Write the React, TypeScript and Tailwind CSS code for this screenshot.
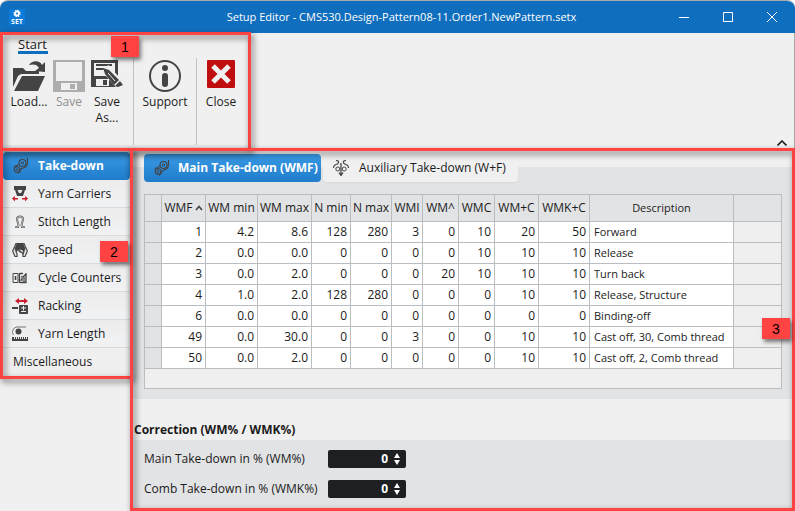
import type { ReactNode } from "react";

type NavItem = { label: string; icon: ReactNode };

type Row = { values: string[]; description: string };

const columns = ["WMF", "WM min", "WM max", "N min", "N max", "WMI", "WM^", "WMC", "WM+C", "WMK+C"];

const rows: Row[] = [
  { values: ["1", "4.2", "8.6", "128", "280", "3", "0", "10", "20", "50"], description: "Forward" },
  { values: ["2", "0.0", "0.0", "0", "0", "0", "0", "10", "10", "10"], description: "Release" },
  { values: ["3", "0.0", "2.0", "0", "0", "0", "20", "10", "10", "10"], description: "Turn back" },
  { values: ["4", "1.0", "2.0", "128", "280", "0", "0", "0", "10", "10"], description: "Release, Structure" },
  { values: ["6", "0.0", "0.0", "0", "0", "0", "0", "0", "0", "0"], description: "Binding-off" },
  { values: ["49", "0.0", "30.0", "0", "0", "3", "0", "0", "10", "10"], description: "Cast off, 30, Comb thread" },
  { values: ["50", "0.0", "2.0", "0", "0", "0", "0", "0", "10", "10"], description: "Cast off, 2, Comb thread" },
];

function SetLogo() {
  return (
    <svg width="16" height="16" viewBox="0 0 16 16" className="bg-[#0a7bd8]" aria-hidden="true">
      <circle cx="8" cy="4.5" r="2" fill="none" stroke="#fff" strokeWidth="1.8" />
      <circle cx="8" cy="4.5" r="3.1" fill="none" stroke="#fff" strokeWidth="1.2" strokeDasharray="1.4 1.03" />
      <text x="8" y="15" textAnchor="middle" fontSize="7" fontWeight="700" fill="#fff">
        SET
      </text>
    </svg>
  );
}

function LoadIcon() {
  return (
    <svg width="32" height="32" viewBox="0 0 32 32" fill="#444" aria-hidden="true">
      <path d="M0 8H10L13 11H26V14H8L5 16L0 27Z" />
      <path d="M9 16H32L25 31H1Z" />
      <path d="M16 5C19 0 27 0 29 5L32 2V12L22 11L26 8C24 4 20 4 16 5Z" />
    </svg>
  );
}

function SaveIcon() {
  return (
    <svg width="32" height="32" viewBox="0 0 32 32" fill="#adadad" aria-hidden="true">
      <path fillRule="evenodd" d="M0 0H32V32H0ZM3 2V21H29V2ZM8 23V30H24V23Z" />
      <path d="M17 24H22V29H17Z" />
    </svg>
  );
}

function SaveAsIcon() {
  return (
    <svg width="32" height="32" viewBox="0 0 32 32" aria-hidden="true">
      <path fill="#444" fillRule="evenodd" d="M0 0H27V27H0ZM3 3V16H24V3ZM5 19V26H18V19Z" />
      <path fill="#444" d="M5 4H21V6H5ZM5 8H13V10H5ZM12 20H16V25H12Z" />
      <path d="M14 8L30 26" stroke="#f0f0f0" strokeWidth="9" />
      <path fill="#444" d="M12 8L18 10L28 20L23 25L14 14Z" />
      <path fill="#444" d="M29 21L32 25L27 27L24 26Z" />
      <path d="M17 13L24 21" stroke="#f0f0f0" strokeWidth="1" />
    </svg>
  );
}

function SupportIcon() {
  return (
    <svg width="32" height="32" viewBox="0 0 32 32" fill="#444" aria-hidden="true">
      <circle cx="16" cy="16" r="15" fill="none" stroke="#444" strokeWidth="2" />
      <circle cx="16" cy="8" r="3" />
      <path d="M13 16A3 3 0 0 1 19 16V24A3 3 0 0 1 13 24Z" />
    </svg>
  );
}

function CloseIcon() {
  return (
    <svg width="28" height="28" viewBox="0 0 28 28" aria-hidden="true">
      <rect width="28" height="28" rx="1" fill="#c00d0d" />
      <path d="M6 6L22 22M22 6L6 22" stroke="#f0f0f0" strokeWidth="5" />
    </svg>
  );
}

function TakeDownIcon() {
  return (
    <svg width="16" height="16" viewBox="0 0 16 16" fill="none" stroke="#444" aria-hidden="true">
      <circle cx="9.5" cy="5" r="3.5" strokeWidth="1.2" />
      <circle cx="9.5" cy="5" r="1.2" strokeWidth="1" />
      <circle cx="4" cy="11.5" r="2.8" strokeWidth="1.2" />
      <circle cx="4" cy="11.5" r="0.8" strokeWidth="1" />
      <path d="M14.5 0V5C14.5 9 11 10 8.5 10.5C7.5 11 8 14 5 15.5M1 9C2 7 5 8 6 6" strokeWidth="1.1" />
    </svg>
  );
}

function YarnCarriersIcon() {
  return (
    <svg width="16" height="16" viewBox="0 0 16 16" aria-hidden="true">
      <path fill="#444" fillRule="evenodd" d="M2 0H14V4H13L11 10H5L3 4H2ZM5.5 4L7 7H9L10.5 4Z" />
      <path fill="#c8202c" d="M0 12.5L3 10V12H6V13.5H3V15.5ZM16 12.5L13 10V12H10V13.5H13V15.5Z" />
    </svg>
  );
}

function StitchLengthIcon() {
  return (
    <svg width="16" height="16" viewBox="0 0 16 16" fill="none" aria-hidden="true">
      <path d="M3 13H6C7.5 10 5 8 5 5.5A3 3 0 0 1 11 5.5C11 8 8.5 10 10 13H13" stroke="#555" strokeWidth="2" />
      <path d="M3 13H6C7.5 10 5 8 5 5.5A3 3 0 0 1 11 5.5C11 8 8.5 10 10 13H13" stroke="#eee" strokeWidth=".7" />
    </svg>
  );
}

function SpeedIcon() {
  return (
    <svg width="16" height="16" viewBox="0 0 16 16" aria-hidden="true">
      <path
        d="M4 1.5H12L15.3 9L13 14.5H11V11.5L12 10C11 6 5 6 4 10L5 11.5V14.5H3L.7 9Z"
        fill="#eee"
        stroke="#444"
        strokeWidth="1.2"
      />
      <path d="M4.5 2H11.5L13.5 7L12 10C10.5 6 5.5 6 4 10L2.5 7Z" fill="#444" />
      <path d="M6 7L12 12L7 9.5Z" fill="#444" stroke="#444" strokeWidth=".8" />
    </svg>
  );
}

function CycleCountersIcon() {
  return (
    <svg width="16" height="16" viewBox="0 0 16 16" fill="none" stroke="#444" aria-hidden="true">
      <path d="M1 3.5H6V12.5H1Z" strokeWidth="1" />
      <path d="M3.5 6V10" strokeWidth="1.6" />
      <path d="M7.5 3V13M8 3.5H11M10 6V10H8.5M8 12.5H14.5M14 3V13M11 7L14 4M12 7V13" strokeWidth="1.3" />
    </svg>
  );
}

function RackingIcon() {
  return (
    <svg width="16" height="16" viewBox="0 0 16 16" aria-hidden="true">
      <path fill="#c8202c" d="M3 3L7 0V2H12V0L16 3L12 6V4H7V6Z" />
      <path d="M0 10H6" stroke="#444" strokeWidth="2" />
      <rect x="7" y="7" width="9" height="9" rx="1" fill="#444" />
      <path d="M9 10H14M11.5 8V12.5M9 13.5H14" stroke="#eee" />
    </svg>
  );
}

function YarnLengthIcon() {
  return (
    <svg width="16" height="16" viewBox="0 0 16 16" fill="none" aria-hidden="true">
      <path d="M14 1H5A5 5 0 0 0 1.5 9" stroke="#777" />
      <circle cx="6.5" cy="5.5" r="3" fill="#444" />
      <path d="M0 11H16V15H0Z" fill="#444" />
      <path d="M2.5 11V13M4.5 11V13M6.5 11V13M8.5 11V13M10.5 11V13M12.5 11V13M14.5 11V13" stroke="#eee" />
    </svg>
  );
}

function AuxiliaryIcon() {
  return (
    <svg width="16" height="16" viewBox="0 0 16 16" fill="none" stroke="#444" aria-hidden="true">
      <circle cx="4.8" cy="9" r="2" strokeWidth="1" />
      <circle cx="11.2" cy="9" r="2" strokeWidth="1" />
      <path d="M8 3V15M6 12.5L8 15.5L10 12.5" strokeWidth="1.3" />
      <path d="M3 .5C7 .5 6 4 3 4.5C1 5 .5 6 .5 8M13 .5C9 .5 10 4 13 4.5C15 5 15.5 6 15.5 8" strokeWidth="1.1" />
    </svg>
  );
}

const navItems: NavItem[] = [
  { label: "Yarn Carriers", icon: <YarnCarriersIcon /> },
  { label: "Stitch Length", icon: <StitchLengthIcon /> },
  { label: "Speed", icon: <SpeedIcon /> },
  { label: "Cycle Counters", icon: <CycleCountersIcon /> },
  { label: "Racking", icon: <RackingIcon /> },
  { label: "Yarn Length", icon: <YarnLengthIcon /> },
];

function Frame() {
  return (
    <div className="pointer-events-none absolute inset-0 z-10 border-3 border-[#ff4343] drop-shadow-[2px_3px_3px_rgba(0,0,0,0.6)]" />
  );
}

function Marker({ children, className }: { children: ReactNode; className: string }) {
  return (
    <span
      className={`absolute z-20 flex h-[21px] w-7 items-center justify-center bg-[#ff4343] font-['Liberation_Sans'] text-sm text-black shadow-[2px_3px_4px_rgba(0,0,0,0.5)] ${className}`}
    >
      {children}
    </span>
  );
}

function RibbonButton({ icon, label, className }: { icon: ReactNode; label: ReactNode; className: string }) {
  return (
    <button type="button" className={`flex flex-col items-center gap-0.5 text-center leading-4 ${className}`}>
      <span className="flex h-8 items-start">{icon}</span>
      <span>{label}</span>
    </button>
  );
}

function PercentField({ id, label }: { id: string; label: string }) {
  return (
    <div className="flex items-center">
      <label htmlFor={id} className="w-46">
        {label}
      </label>
      <div className="flex h-[18px] w-[78px] items-center rounded-xs bg-[#1d1f23] pr-1 text-white">
        <input
          id={id}
          type="text"
          inputMode="numeric"
          defaultValue="0"
          className="w-full min-w-0 bg-transparent pr-1 text-right font-bold outline-none"
        />
        <div className="flex flex-col gap-0.5">
          <button type="button" aria-label="Increase" className="block">
            <svg width="10" height="5" viewBox="0 0 10 5" fill="#fff">
              <path d="M2 5L5 0L8 5Z" />
            </svg>
          </button>
          <button type="button" aria-label="Decrease" className="block">
            <svg width="10" height="5" viewBox="0 0 10 5" fill="#fff">
              <path d="M2 0L5 5L8 0Z" />
            </svg>
          </button>
        </div>
      </div>
    </div>
  );
}

export default function App() {
  return (
    <div className="flex min-h-screen flex-col overflow-hidden rounded-t-lg border-t border-[#a9a9a9] bg-[#f0f0f0] font-['Open_Sans',sans-serif] text-xs text-[#1b1b1b]">
      <header className="grid h-8 grid-cols-[1fr_auto_1fr] items-center bg-[#106ebe] pr-px pl-[9px] text-white">
        <SetLogo />
        <h1 className="text-[11px]">Setup Editor - CMS530.Design-Pattern08-11.Order1.NewPattern.setx</h1>
        <div className="flex justify-end">
          {["Minimize", "Maximize", "Close window"].map((name, index) => (
            <button key={name} type="button" aria-label={name} className="flex w-11 justify-center">
              <svg width="12" height="12" viewBox="0 0 12 12" fill="none" stroke="#fff">
                {index === 0 ? <path d="M1 6.5H11" /> : null}
                {index === 1 ? <path d="M1.5 1.5H10.5V10.5H1.5Z" /> : null}
                {index === 2 ? <path d="M1 1L11 11M11 1L1 11" /> : null}
              </svg>
            </button>
          ))}
        </div>
      </header>

      <section className="flex h-[115px] items-end justify-between border-r border-[#a9a9a9]">
        <div className="relative -mb-[3px] h-[119px] w-[251px] pt-1.5">
          <Frame />
          <Marker className="top-1 right-28">1</Marker>
          <h2 className="ml-[18px] w-[30px] border-b-3 border-[#106ebe] text-[13px] leading-[13px]">Start</h2>
          <div className="flex pl-[9px]">
            <RibbonButton className="w-10 pt-1.5" icon={<LoadIcon />} label="Load..." />
            <RibbonButton className="w-10 pt-1.5 text-[#8f8f8f]" icon={<SaveIcon />} label="Save" />
            <RibbonButton
              className="w-9 pt-1.5"
              icon={<SaveAsIcon />}
              label={
                <>
                  Save
                  <br />
                  As...
                </>
              }
            />
            <div className="mt-1 ml-2 h-[87px] w-px bg-[#c2c2c4]" />
            <RibbonButton className="w-[62px] pt-1.5" icon={<SupportIcon />} label="Support" />
            <div className="mt-1 h-[87px] w-px bg-[#c2c2c4]" />
            <RibbonButton className="w-12 pt-1.5" icon={<CloseIcon />} label="Close" />
          </div>
        </div>
        <button type="button" aria-label="Collapse ribbon" className="mr-[7px] mb-0.5">
          <svg width="10" height="6" viewBox="0 0 10 6" fill="none" stroke="#222" strokeWidth="1.6">
            <path d="M0.5 5.5L5 1L9.5 5.5" />
          </svg>
        </button>
      </section>

      <div className="flex flex-1">
        <nav className="relative w-[133px] shrink-0 self-start px-[3px] pt-1 pb-[3px]">
          <Frame />
          <Marker className="top-[93px] right-[5px]">2</Marker>
          <button
            type="button"
            className="flex h-7 w-full items-center gap-[9px] rounded-sm bg-linear-to-b from-[#3a9ae4] to-[#1f7ccb] pl-2.5 font-bold text-white"
          >
            <TakeDownIcon />
            Take-down
          </button>
          {navItems.map((item) => (
            <button
              key={item.label}
              type="button"
              className="flex h-7 w-full items-center gap-2.5 border-b border-[#d9dadc] bg-linear-to-b from-[#ececed] to-[#f1f2f3] pl-[9px] whitespace-nowrap"
            >
              {item.icon}
              {item.label}
            </button>
          ))}
          <button type="button" className="flex h-7 w-full items-center bg-[#efeff0] pl-2.5">
            Miscellaneous
          </button>
        </nav>

        <main className="relative -ml-[3px] flex min-w-0 flex-1 flex-col pt-[19px]">
          <Frame />
          <Marker className="top-[170px] right-[5px]">3</Marker>
          <section className="bg-[#e2e3e5] pr-[13px] pb-[10px] pl-3.5">
            <div className="-mt-[13px] mb-3 flex gap-0.5">
              <button
                type="button"
                className="flex h-7 w-[177px] items-center gap-2 rounded-sm bg-linear-to-b from-[#3a9ae4] to-[#1f7ccb] pl-2.5 font-bold whitespace-nowrap text-white"
              >
                <TakeDownIcon />
                Main Take-down (WMF)
              </button>
              <button
                type="button"
                className="flex h-7 w-[195px] items-center gap-2.5 rounded-sm bg-[#f0f0f1] pl-2.5 whitespace-nowrap shadow-xs"
              >
                <AuxiliaryIcon />
                Auxiliary Take-down (W+F)
              </button>
            </div>
            <table className="w-full table-fixed border-collapse border border-[#bcbdc0] bg-[#efefef]">
              <colgroup>
                <col className="w-[17px]" />
                <col className="w-11" />
                <col className="w-13" />
                <col className="w-[54px]" />
                <col className="w-[39px]" />
                <col className="w-[41px]" />
                <col className="w-[31px]" />
                <col className="w-9" />
                <col className="w-9" />
                <col className="w-11" />
                <col className="w-[51px]" />
                <col className="w-36" />
                <col />
              </colgroup>
              <thead>
                <tr className="h-[27px] bg-[#e2e3e5]">
                  <th className="border border-[#bcbdc0]" />
                  {columns.map((column, index) => (
                    <th key={column} className="border border-[#bcbdc0] p-0 font-normal whitespace-nowrap">
                      <span className="flex items-center justify-center gap-0.5">
                        {column}
                        {index === 0 ? (
                          <svg width="8" height="6" viewBox="0 0 8 6" fill="none" stroke="#444" strokeWidth="1.6">
                            <path d="M1 5L4 1.5L7 5" />
                          </svg>
                        ) : null}
                      </span>
                    </th>
                  ))}
                  <th className="border border-[#bcbdc0] p-0 text-[11px] font-normal">Description</th>
                  <th className="border border-[#bcbdc0]" />
                </tr>
              </thead>
              <tbody>
                {rows.map((row) => (
                  <tr key={row.values[0]} className="h-[21px] leading-4">
                    <td className="border border-[#bcbdc0] bg-[#e2e3e5] p-0" />
                    {row.values.map((value, index) => (
                      <td key={columns[index]} className="border border-[#bcbdc0] bg-white p-0 pr-[3px] text-right">
                        {value}
                      </td>
                    ))}
                    <td className="border border-[#bcbdc0] bg-white p-0 pl-1 text-[11px] whitespace-nowrap">
                      {row.description}
                    </td>
                    <td className="border border-[#bcbdc0] p-0" />
                  </tr>
                ))}
                <tr className="h-5">
                  <td colSpan={13} className="p-0" />
                </tr>
              </tbody>
            </table>
          </section>

          <h2 className="pt-[23px] pb-0.5 pl-1 leading-4 font-bold">Correction (WM% / WMK%)</h2>
          <section className="flex flex-1 flex-col gap-3 bg-[#e2e3e5] px-3.5 pt-2.5 leading-[18px]">
            <PercentField id="main-take-down" label="Main Take-down in % (WM%)" />
            <PercentField id="comb-take-down" label="Comb Take-down in % (WMK%)" />
          </section>
        </main>
      </div>
    </div>
  );
}
